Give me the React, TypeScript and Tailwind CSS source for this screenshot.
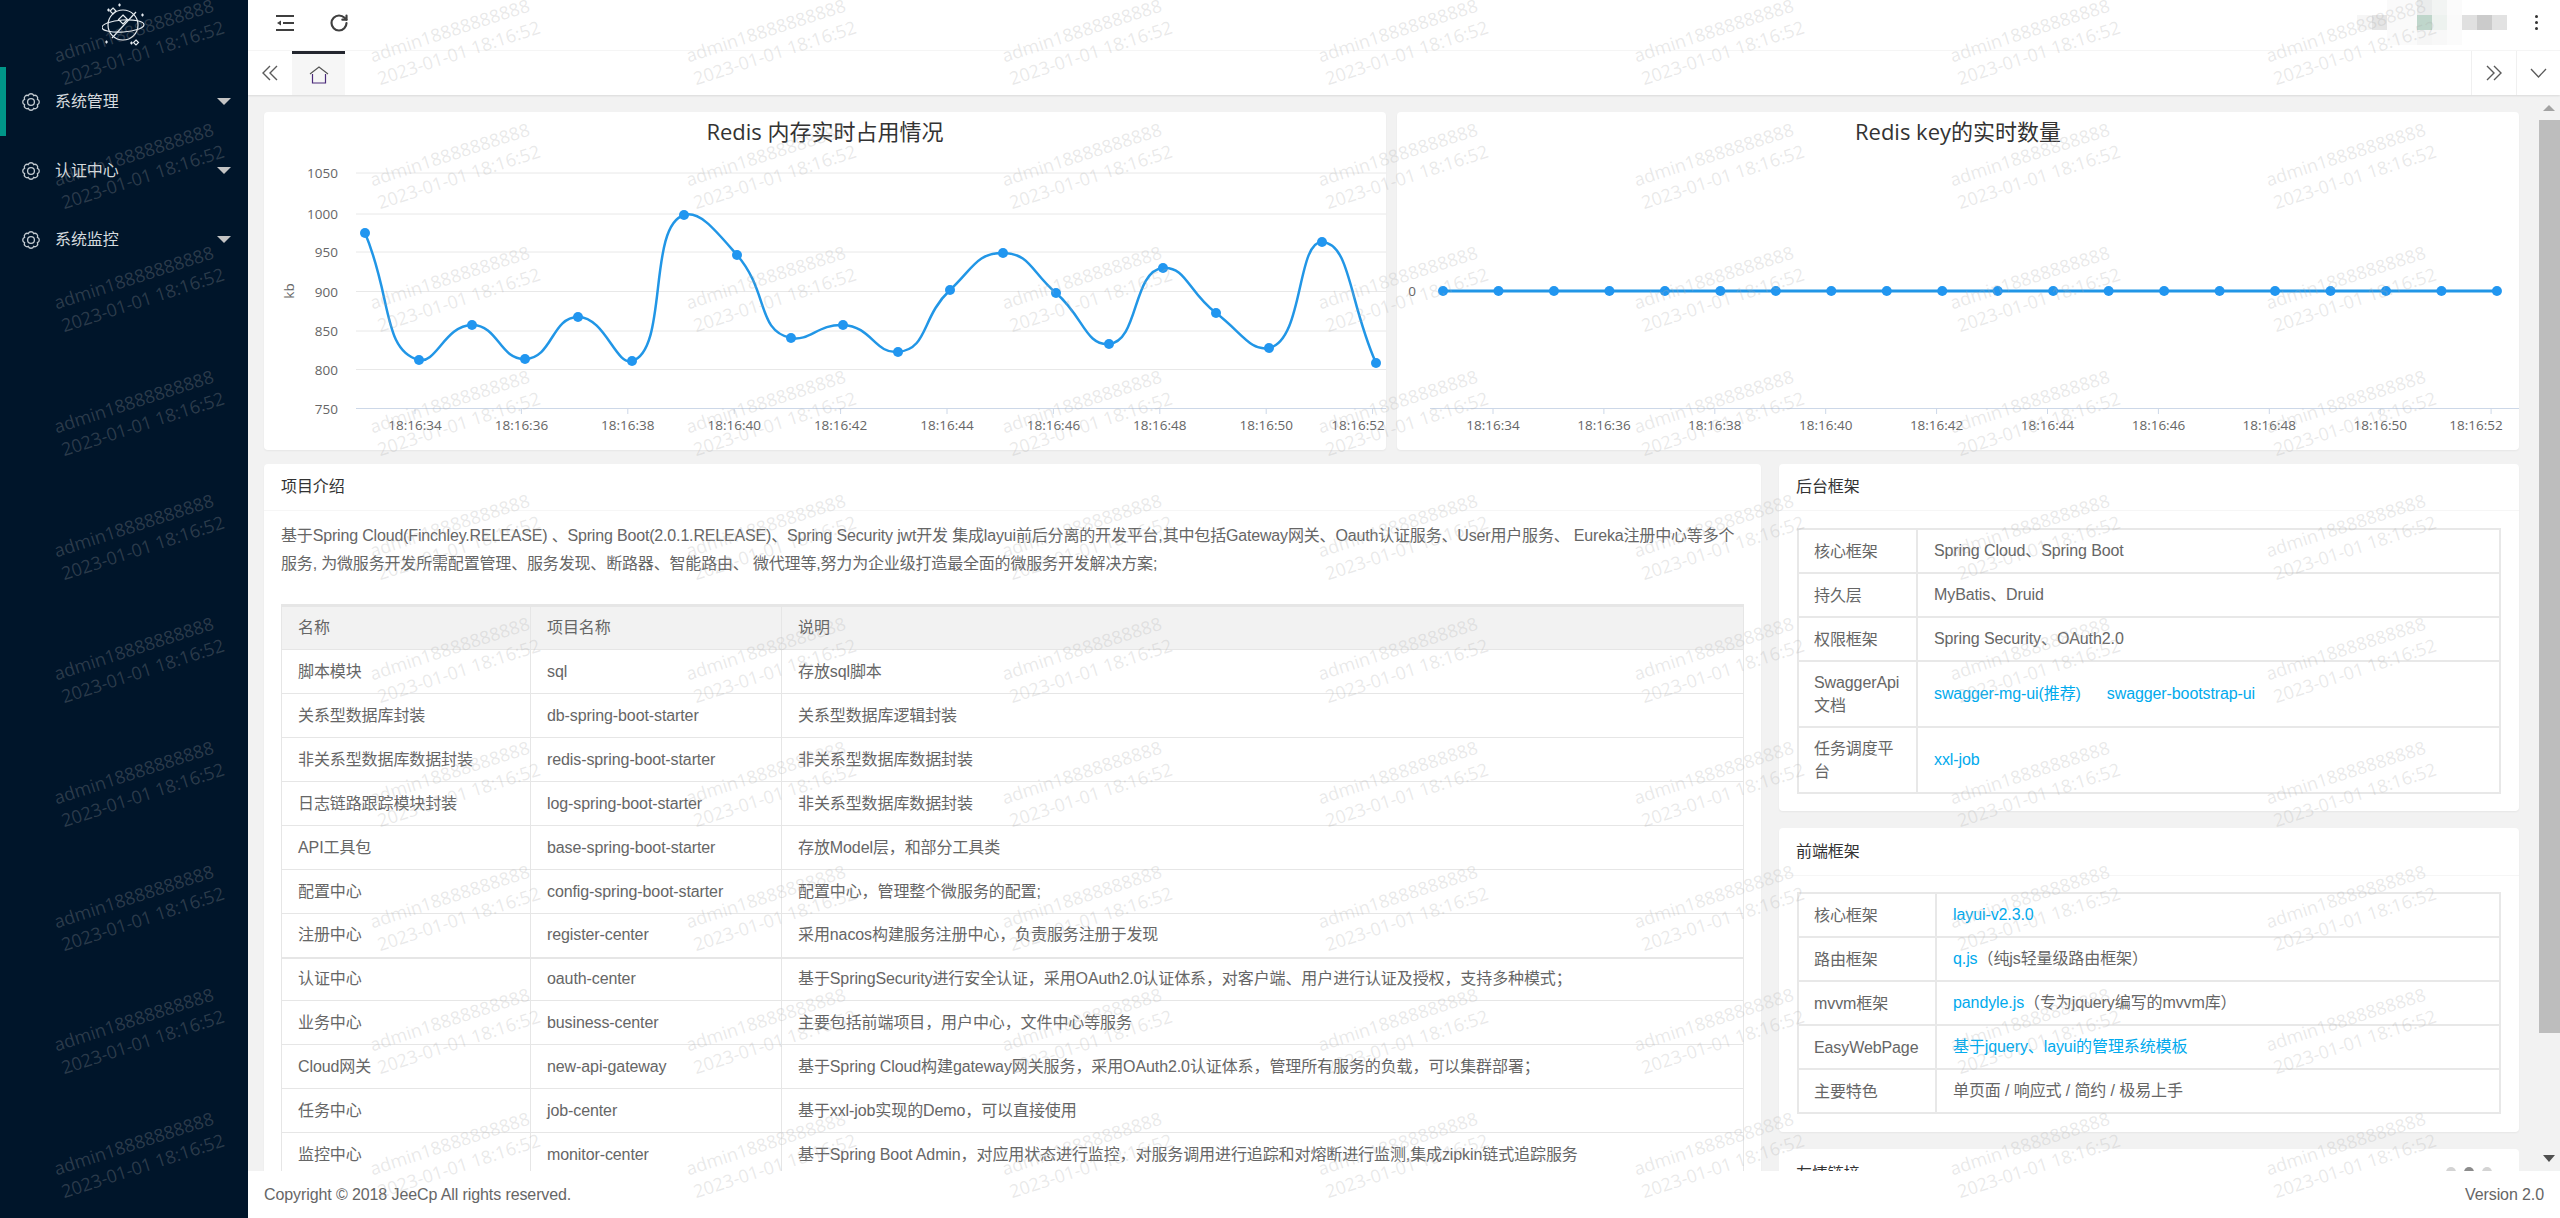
import { RotateCw } from 'lucide-react';

type Point = [number, number];

const FONT = "font-['Liberation_Sans','Noto_Sans_CJK_SC',sans-serif]";
const CHART_FONT = "'Open Sans','Noto Sans CJK SC',sans-serif";

const memoryPoints: Point[] = [
  [365, 233], [419, 360], [472, 325], [525, 359], [578, 317],
  [632, 361], [684, 215], [737, 255], [791, 338], [843, 325],
  [898, 352], [950, 290], [1003, 253], [1056, 293], [1109, 344],
  [1163, 268], [1216, 313], [1269, 348], [1322, 242], [1376, 363],
];

const keyPoints: Point[] = Array.from({ length: 20 }, (_, i) => [1443 + i * 55.47, 291]);

const timeLabels = ['18:16:34', '18:16:36', '18:16:38', '18:16:40', '18:16:42', '18:16:44', '18:16:46', '18:16:48', '18:16:50', '18:16:52'];

const yTicks: [string, number][] = [
  ['1050', 173], ['1000', 214], ['950', 252], ['900', 291.5], ['850', 331], ['800', 369.5], ['750', 408.5],
];

const projectRows = [
  ['脚本模块', 'sql', '存放sql脚本'],
  ['关系型数据库封装', 'db-spring-boot-starter', '关系型数据库逻辑封装'],
  ['非关系型数据库数据封装', 'redis-spring-boot-starter', '非关系型数据库数据封装'],
  ['日志链路跟踪模块封装', 'log-spring-boot-starter', '非关系型数据库数据封装'],
  ['API工具包', 'base-spring-boot-starter', '存放Model层，和部分工具类'],
  ['配置中心', 'config-spring-boot-starter', '配置中心，管理整个微服务的配置;'],
  ['注册中心', 'register-center', '采用nacos构建服务注册中心，负责服务注册于发现'],
  ['认证中心', 'oauth-center', '基于SpringSecurity进行安全认证，采用OAuth2.0认证体系，对客户端、用户进行认证及授权，支持多种模式；'],
  ['业务中心', 'business-center', '主要包括前端项目，用户中心，文件中心等服务'],
  ['Cloud网关', 'new-api-gateway', '基于Spring Cloud构建gateway网关服务，采用OAuth2.0认证体系，管理所有服务的负载，可以集群部署；'],
  ['任务中心', 'job-center', '基于xxl-job实现的Demo，可以直接使用'],
  ['监控中心', 'monitor-center', '基于Spring Boot Admin，对应用状态进行监控，对服务调用进行追踪和对熔断进行监测,集成zipkin链式追踪服务'],
];

const mosaic = [
  'bg-white', 'bg-white', 'bg-[#fafafa]', 'bg-[#fafafa]', 'bg-[#eaecec]', 'bg-[#f2f4f3]', 'bg-[#fbfbfb]', 'bg-white', 'bg-white', 'bg-white',
  'bg-[#f6f6f6]', 'bg-[#e5e5e5]', 'bg-[#fafafa]', 'bg-[#fafafa]', 'bg-[#bfd6cb]', 'bg-[#edf2ef]', 'bg-[#fafafa]', 'bg-[#e0e0e0]', 'bg-[#cbcbcb]', 'bg-[#e2e2e2]',
  'bg-white', 'bg-white', 'bg-[#fbfbfb]', 'bg-[#fbfbfb]', 'bg-[#f6f6f6]', 'bg-[#f8f8f8]', 'bg-[#fbfbfb]', 'bg-white', 'bg-white', 'bg-white',
];

// echarts style smoothing, flattened at the peaks and valleys
function smoothPath(points: Point[]) {
  const cps = points.map((p, i) => {
    const prev = points[i - 1] || p;
    const next = points[i + 1] || p;
    const isExtreme = (p[1] - prev[1]) * (next[1] - p[1]) < 0;
    const vx = (next[0] - prev[0]) * 0.5;
    const vy = (next[1] - prev[1]) * 0.5 * (isExtreme ? 0.3 : 1);
    const d0 = Math.hypot(p[0] - prev[0], p[1] - prev[1]);
    const d1 = Math.hypot(next[0] - p[0], next[1] - p[1]);
    const r0 = d0 / (d0 + d1);
    const r1 = d1 / (d0 + d1);
    return { before: [p[0] - vx * r0, p[1] - vy * r0], after: [p[0] + vx * r1, p[1] + vy * r1] };
  });
  let d = `M${points[0][0]} ${points[0][1]}`;
  for (let i = 1; i < points.length; i++) {
    d += ` C${cps[i - 1].after[0]} ${cps[i - 1].after[1]} ${cps[i].before[0]} ${cps[i].before[1]} ${points[i][0]} ${points[i][1]}`;
  }
  return d;
}

// scalloped gear outline, 8 lobes round the centre
function gearPath() {
  const at = (i: number) => {
    const a = ((i + 0.5) * Math.PI) / 4;
    return `${(10 + 7 * Math.cos(a)).toFixed(2)} ${(10 + 7 * Math.sin(a)).toFixed(2)}`;
  };
  let d = `M${at(0)}`;
  for (let i = 1; i <= 8; i++) {
    d += ` A2.9 2.9 0 0 1 ${at(i)}`;
  }
  return d + 'z';
}

function GearIcon() {
  return (
    <svg width="20" height="20" viewBox="0 0 20 20" fill="none" stroke="#c4ccd2" strokeWidth="1.3">
      <path d={gearPath()} />
      <circle cx="10" cy="10" r="3.4" />
    </svg>
  );
}

function Logo() {
  return (
    <svg width="44" height="44" viewBox="0 0 44 44" fill="none" stroke="#e6ecf0" strokeWidth="1.2">
      <circle cx="21" cy="23" r="15" />
      <ellipse cx="21" cy="24" rx="21" ry="6" transform="rotate(-4 21 24)" />
      <path d="M10 36 L34 10" />
      <path d="M21 13 l4.5 4.5 -4.5 4.5 -4.5 -4.5z" />
      <path d="M11 6 l3 3 -3 3 -3 -3z" />
      <path d="M34 38 l2.5 2.5 -2.5 2.5 -2.5 -2.5z" />
      <path d="M5 8 h3 M6.5 6.5 v3 M16 3 h3 M17.5 1.5 v3 M39 13 h3 M40.500 11.500 v3 M3 40 h3 M4.500 38.500 v3 M28 41 h3 M29.500 39.500 v3" />
    </svg>
  );
}

function MenuItem({ label, active }: { label: string; active?: boolean }) {
  return (
    <div className={`flex h-[69px] items-center justify-between border-l-[6px] pl-[15px] pr-[17px] ${active ? 'border-[#009688]' : 'border-transparent'}`}>
      <div className="flex items-center gap-[14px]">
        <GearIcon />
        <span className="text-base text-[#d5dade]">{label}</span>
      </div>
      <span className="h-0 w-0 border-x-[7px] border-t-[7px] border-x-transparent border-t-[#c4c4c4]" />
    </div>
  );
}

function Sidebar() {
  return (
    <aside className="w-[248px] shrink-0 bg-[#00152a]">
      <div className="flex h-[67px] justify-center pt-[2px]">
        <Logo />
      </div>
      <MenuItem label="系统管理" active />
      <MenuItem label="认证中心" />
      <MenuItem label="系统监控" />
    </aside>
  );
}

function TopBar() {
  return (
    <div className="flex h-[51px] shrink-0 items-start justify-between border-b border-[#f6f6f6] bg-white pl-7 pr-[22px]">
      <div className="flex h-[45px] items-center gap-[35px]">
        <svg width="18" height="16" viewBox="0 0 18 16" fill="none" stroke="#3f3f3f" strokeWidth="2">
          <path d="M0 1 H18 M0 15 H18 M7 8 H18" />
          <path d="M5 5.500 V10.500 L1 8z" fill="#3f3f3f" stroke="none" />
        </svg>
        <RotateCw size={20} strokeWidth={2.6} className="text-[#3f3f3f]" />
      </div>
      <div className="flex items-start gap-7">
        <div className="grid grid-cols-[repeat(10,15px)] grid-rows-[repeat(3,15px)]">
          {mosaic.map((color, i) => (
            <span key={i} className={color} />
          ))}
        </div>
        <div className="flex h-[45px] flex-col items-center justify-center gap-[3px]">
          <span className="h-[3px] w-[3px] rounded-full bg-[#333]" />
          <span className="h-[3px] w-[3px] rounded-full bg-[#333]" />
          <span className="h-[3px] w-[3px] rounded-full bg-[#333]" />
        </div>
      </div>
    </div>
  );
}

function TabBar() {
  return (
    <div className="z-10 flex h-[44px] shrink-0 items-stretch justify-between bg-white shadow-[0_1px_2px_rgba(0,0,0,0.1)]">
      <div className="flex items-stretch">
        <div className="flex w-[44px] items-center justify-center">
          <svg width="16" height="16" viewBox="0 0 16 16" fill="none" stroke="#5a5a5a" strokeWidth="1.4">
            <path d="M8 1 L1 8 L8 15 M15 1 L8 8 L15 15" />
          </svg>
        </div>
        <div className="flex w-[53px] items-center justify-center border-t-[3px] border-[#23262e] bg-[#f6f6f6]">
          <svg width="20" height="18" viewBox="0 0 20 18" fill="none" strokeWidth="1.2">
            <path d="M1 8 L10 1 L19 8" stroke="#555" />
            <path d="M3.500 8 V17 H16.500 V8" stroke="#4b2a7a" />
          </svg>
        </div>
      </div>
      <div className="flex items-stretch">
        <div className="flex w-[45px] items-center justify-center border-l border-[#f0f0f0]">
          <svg width="16" height="16" viewBox="0 0 16 16" fill="none" stroke="#5a5a5a" strokeWidth="1.4">
            <path d="M1 1 L8 8 L1 15 M8 1 L15 8 L8 15" />
          </svg>
        </div>
        <div className="flex w-[44px] items-center justify-center border-l border-[#f0f0f0]">
          <svg width="17" height="10" viewBox="0 0 17 10" fill="none" stroke="#5a5a5a" strokeWidth="1.3">
            <path d="M1 1 L8.500 9 L16 1" />
          </svg>
        </div>
      </div>
    </div>
  );
}

function AxisX({ ticks, labels, start, end }: { ticks: number[]; labels: number[]; start: number; end: number }) {
  return (
    <g>
      <path d={`M${start} 408.500 H${end}`} stroke="#cdd8e8" strokeWidth="1" />
      {ticks.map((x) => (
        <path key={x} d={`M${x} 408.500 V414`} stroke="#cdd8e8" strokeWidth="1" />
      ))}
      {labels.map((x, i) => (
        <text key={i} x={x} y={430} textAnchor="middle" fontSize="13.5" fill="#666" fontFamily={CHART_FONT}>
          {timeLabels[i]}
        </text>
      ))}
    </g>
  );
}

function Series({ points, width }: { points: Point[]; width: number }) {
  return (
    <g>
      <path d={smoothPath(points)} fill="none" stroke="#2196e6" strokeWidth={width} />
      {points.map((p, i) => (
        <circle key={i} cx={p[0]} cy={p[1]} r="5" fill="#2196f0" />
      ))}
    </g>
  );
}

function MemoryChart() {
  const ticks = timeLabels.map((_, i) => 415 + i * 106.4);
  const labels = ticks.map((x, i) => (i === 9 ? 1358 : x));
  return (
    <div className="h-[338px] w-[1122px] rounded-sm bg-white tracking-normal shadow-[0_1px_2px_rgba(0,0,0,0.05)]">
      <svg width="1122" height="338" viewBox="264 112 1122 338">
        <text x="825" y="140" textAnchor="middle" fontSize="22" fill="#333" fontFamily={CHART_FONT}>
          Redis 内存实时占用情况
        </text>
        {yTicks.map(([label, y]) => (
          <g key={label}>
            {label !== '750' && <path d={`M356 ${y} H1386`} stroke="#e8e8e8" strokeWidth="1" />}
            <text x="338" y={y + 5} textAnchor="end" fontSize="13.5" fill="#666" fontFamily={CHART_FONT}>
              {label}
            </text>
          </g>
        ))}
        <text x="294" y="291" textAnchor="middle" fontSize="13.5" fill="#666" fontFamily={CHART_FONT} transform="rotate(-90 294 291)">
          kb
        </text>
        <AxisX ticks={ticks} labels={labels} start={356} end={1386} />
        <Series points={memoryPoints} width={2.5} />
      </svg>
    </div>
  );
}

function KeyChart() {
  const ticks = timeLabels.map((_, i) => 1493 + i * 110.9);
  const labels = ticks.map((x, i) => (i === 9 ? 2476 : x));
  return (
    <div className="h-[338px] w-[1122px] rounded-sm bg-white tracking-normal shadow-[0_1px_2px_rgba(0,0,0,0.05)]">
      <svg width="1122" height="338" viewBox="1397 112 1122 338">
        <text x="1958" y="140" textAnchor="middle" fontSize="22" fill="#333" fontFamily={CHART_FONT}>
          Redis key的实时数量
        </text>
        <text x="1412" y="296" textAnchor="middle" fontSize="13.5" fill="#666" fontFamily={CHART_FONT}>
          0
        </text>
        <AxisX ticks={ticks} labels={labels} start={1430} end={2519} />
        <Series points={keyPoints} width={3} />
      </svg>
    </div>
  );
}

function CardHeader({ title, tall }: { title: string; tall?: boolean }) {
  return (
    <div className={`flex items-center border-b border-[#f6f6f6] px-[17px] text-base text-[#333] ${tall ? 'h-[48px]' : 'h-[47px]'}`}>
      {title}
    </div>
  );
}

function ProjectCard() {
  return (
    <div className="w-[1497px] shrink-0 rounded-sm bg-white shadow-[0_1px_2px_rgba(0,0,0,0.05)]">
      <CardHeader title="项目介绍" />
      <div className="px-[17px] pt-[11px]">
        <p className="mb-[26px] text-base leading-7 tracking-[-0.17px] text-[#666]">
          基于Spring Cloud(Finchley.RELEASE) 、Spring Boot(2.0.1.RELEASE)、Spring Security jwt开发 集成layui前后分离的开发平台,其中包括Gateway网关、Oauth认证服务、User用户服务、 Eureka注册中心等多个服务, 为微服务开发所需配置管理、服务发现、断路器、智能路由、 微代理等,努力为企业级打造最全面的微服务开发解决方案;
        </p>
        <table className="w-[1463px] table-fixed border-collapse border-t-[3px] border-[#e6e6e6] text-base text-[#666]">
          <thead>
            <tr className="h-[44px] bg-[#f2f2f2]">
              <th className="w-[249px] border border-[#e6e6e6] px-4 text-left font-normal">名称</th>
              <th className="w-[251px] border border-[#e6e6e6] px-4 text-left font-normal">项目名称</th>
              <th className="border border-[#e6e6e6] px-4 text-left font-normal">说明</th>
            </tr>
          </thead>
          <tbody>
            {projectRows.map((row, i) => (
              <tr key={i} className={i === 7 ? 'h-[43px]' : 'h-[44px]'}>
                {row.map((cell, j) => (
                  <td key={j} className={`border border-[#e6e6e6] px-4 ${i === 7 ? 'border-t-2' : ''}`}>
                    {cell}
                  </td>
                ))}
              </tr>
            ))}
          </tbody>
        </table>
      </div>
    </div>
  );
}

function Link({ children }: { children: React.ReactNode }) {
  return <span className="text-[#01aaed]">{children}</span>;
}

function InfoRow({ label, labelWidth, tall, children }: { label: string; labelWidth: string; tall?: boolean; children: React.ReactNode }) {
  return (
    <tr className={tall ? 'h-[66px]' : 'h-[44px]'}>
      <td className={`border-2 border-[#e8e8e8] px-[15px] leading-[23px] ${labelWidth}`}>{label}</td>
      <td className="border-2 border-[#e8e8e8] px-4">{children}</td>
    </tr>
  );
}

function BackendCard() {
  const w = 'w-[119px]';
  return (
    <div className="rounded-sm bg-white shadow-[0_1px_2px_rgba(0,0,0,0.05)]">
      <CardHeader title="后台框架" />
      <div className="px-[18px] py-[17px]">
        <table className="w-[704px] table-fixed border-collapse text-base text-[#666]">
          <tbody>
            <InfoRow label="核心框架" labelWidth={w}>Spring Cloud、Spring Boot</InfoRow>
            <InfoRow label="持久层" labelWidth={w}>MyBatis、Druid</InfoRow>
            <InfoRow label="权限框架" labelWidth={w}>Spring Security、OAuth2.0</InfoRow>
            <InfoRow label="SwaggerApi文档" labelWidth={w} tall>
              <Link>swagger-mg-ui(推荐)</Link>
              <span className="ml-[26px]">
                <Link>swagger-bootstrap-ui</Link>
              </span>
            </InfoRow>
            <InfoRow label="任务调度平台" labelWidth={w} tall>
              <Link>xxl-job</Link>
            </InfoRow>
          </tbody>
        </table>
      </div>
    </div>
  );
}

function FrontendCard() {
  const w = 'w-[138px]';
  return (
    <div className="rounded-sm bg-white shadow-[0_1px_2px_rgba(0,0,0,0.05)]">
      <CardHeader title="前端框架" tall />
      <div className="px-[18px] pb-[18px] pt-4">
        <table className="w-[704px] table-fixed border-collapse text-base text-[#666]">
          <tbody>
            <InfoRow label="核心框架" labelWidth={w}><Link>layui-v2.3.0</Link></InfoRow>
            <InfoRow label="路由框架" labelWidth={w}><Link>q.js</Link>（纯js轻量级路由框架）</InfoRow>
            <InfoRow label="mvvm框架" labelWidth={w}><Link>pandyle.js</Link>（专为jquery编写的mvvm库）</InfoRow>
            <InfoRow label="EasyWebPage" labelWidth={w}><Link>基于jquery、layui的管理系统模板</Link></InfoRow>
            <InfoRow label="主要特色" labelWidth={w}>单页面 / 响应式 / 简约 / 极易上手</InfoRow>
          </tbody>
        </table>
      </div>
    </div>
  );
}

function LinksCard() {
  return (
    <div className="flex h-[60px] items-start justify-between rounded-sm bg-white px-[17px] pr-[27px] pt-[13px] text-base text-[#333]">
      <span>友情链接</span>
      <div className="flex gap-2 pt-[5px]">
        <span className="h-[10px] w-[10px] rounded-full bg-[#d4d4d4]" />
        <span className="h-[10px] w-[10px] rounded-full bg-[#8c8c8c]" />
        <span className="h-[10px] w-[10px] rounded-full bg-[#d4d4d4]" />
      </div>
    </div>
  );
}

function Scrollbar() {
  return (
    <div className="flex w-[22px] shrink-0 flex-col items-center pt-[10px]">
      <span className="h-0 w-0 border-x-[6px] border-b-[6px] border-x-transparent border-b-[#a3a3a3]" />
      <div className="mt-[9px] h-[913px] w-[21px] bg-[#bdbdbd]" />
      <span className="mt-[122px] h-0 w-0 border-x-[6px] border-t-[7px] border-x-transparent border-t-[#505050]" />
    </div>
  );
}

function Footer() {
  return (
    <div className="z-10 flex h-[47px] shrink-0 items-center justify-between bg-white px-4 text-base text-[#666]">
      <span>Copyright © 2018 JeeCp All rights reserved.</span>
      <span>Version 2.0</span>
    </div>
  );
}

function Watermark() {
  const cells = Array.from({ length: 90 }, (_, i) => i);
  return (
    <div className="pointer-events-none absolute inset-0 z-20 overflow-hidden">
      <div className="-ml-[19px] -mt-[21px] grid w-[2844px] grid-cols-[repeat(9,316px)] auto-rows-[123.700px]">
        {cells.map((i) => (
          <div key={i} className="flex items-center justify-center">
            <div className="-rotate-[18deg] whitespace-nowrap font-['Open_Sans',sans-serif] text-[18px] leading-[24px] tracking-normal text-[rgba(170,170,170,0.26)]">
              admin18888888888
              <br />
              2023-01-01 18:16:52
            </div>
          </div>
        ))}
      </div>
    </div>
  );
}

export default function App() {
  return (
    <div className={`relative flex h-screen w-full overflow-hidden bg-[#f2f2f2] tracking-[-0.1px] ${FONT}`}>
      <Sidebar />
      <div className="flex min-w-0 flex-1 flex-col">
        <TopBar />
        <TabBar />
        <div className="flex min-h-0 flex-1">
          <main className="min-w-0 flex-1 overflow-hidden pl-4 pr-[19px] pt-[17px]">
            <div className="flex gap-[11px]">
              <MemoryChart />
              <KeyChart />
            </div>
            <div className="mt-[14px] flex gap-[18px]">
              <ProjectCard />
              <div className="flex w-[740px] shrink-0 flex-col gap-[17px]">
                <BackendCard />
                <FrontendCard />
                <LinksCard />
              </div>
            </div>
          </main>
          <Scrollbar />
        </div>
        <Footer />
      </div>
      <Watermark />
    </div>
  );
}
